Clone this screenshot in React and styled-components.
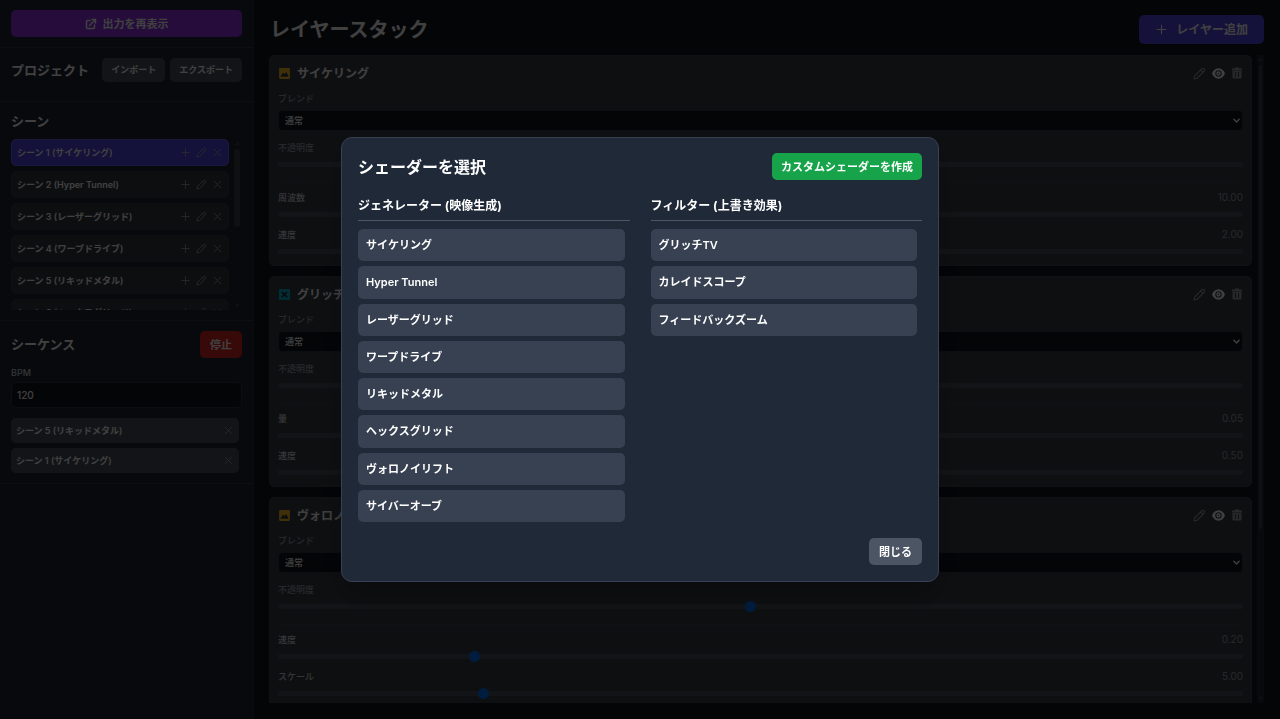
import React from "react";
import styled, { createGlobalStyle } from "styled-components";

const Global = createGlobalStyle`
  * { box-sizing: border-box; }
  html, body, #root { height: 100%; }
  body {
    margin: 0;
    overflow: hidden;
    background: #11141f;
    color: #fff;
    font-family: Inter, "Noto Sans CJK JP", sans-serif;
    font-size: 11px;
    line-height: 16px;
  }
  h1, h2, h3, p, ul { margin: 0; padding: 0; }
  ul { list-style: none; }
  button, input, select { font: inherit; color: inherit; }
`;

const Shell = styled.div`
  display: flex;
  height: 100vh;
  background: #11141f;
`;

const Sidebar = styled.aside`
  flex: 0 0 254px;
  background: #212633;
  border-right: 1px solid #2b303a;
`;

const Section = styled.section`
  padding: 10px 11px ${(p) => p.$bottom || 10}px;
  border-bottom: 1px solid #373b45;
`;

const SectionHead = styled.div`
  display: flex;
  align-items: center;
  justify-content: space-between;
  gap: 5px;
`;

const SequenceHead = styled(SectionHead)`
  margin-bottom: 8px;
`;

const SectionTitle = styled.h2`
  font-size: 13px;
  line-height: 19px;
  font-weight: 700;
  white-space: nowrap;
`;

const tones = {
  purple: "#9333ea",
  indigo: "#4f46e5",
  red: "#dc2626",
  green: "#16a34a",
  slate: "#4b5563",
  gray: "#4e525b",
};

const Button = styled.button`
  display: inline-flex;
  align-items: center;
  justify-content: center;
  gap: 6px;
  height: 27px;
  width: ${(p) => (p.$block ? "100%" : "auto")};
  padding: 0 10px;
  border: 0;
  border-radius: 5px;
  background: ${(p) => tones[p.$tone]};
  font-size: 11px;
  font-weight: 700;
  white-space: nowrap;
`;

const SmallButton = styled(Button)`
  height: 24px;
  padding: 0 9px;
  font-size: 9px;
`;

const WideButton = styled(Button)`
  height: 29px;
  padding: 0 16px;
  gap: 8px;
  font-size: 12px;
`;

const ButtonPair = styled.div`
  display: flex;
  gap: 5px;
`;

const SceneViewport = styled.div`
  display: flex;
  gap: 3px;
  height: 171px;
  margin-top: 8px;
  overflow: hidden;
`;

const SceneList = styled.ul`
  flex: 1;
  display: flex;
  flex-direction: column;
  gap: 5px;
`;

const SceneRow = styled.li`
  flex: none;
  display: flex;
  align-items: center;
  height: 27px;
  padding: 0 5px;
  border: 1px solid ${(p) => (p.$active ? "#6366f1" : "#373a42")};
  border-radius: 5px;
  background: ${(p) => (p.$active ? "#4f46e5" : "#373a42")};
  font-size: 9px;
  font-weight: 600;
`;

const RowName = styled.span`
  flex: 1;
  white-space: nowrap;
`;

const RowActions = styled.div`
  display: flex;
  gap: 5px;
`;

const IconButton = styled.button`
  display: flex;
  padding: 0;
  border: 0;
  background: none;
  color: ${(p) => (p.$bright ? "#fff" : "#9ca0a8")};
`;

const Scrollbar = styled.div`
  display: flex;
  flex-direction: column;
  align-items: center;
  justify-content: space-between;
  flex: 0 0 ${(p) => p.$width}px;
  padding: 2px 0;
  background: #1f2731;
  color: #3c4048;
`;

const ScrollThumb = styled.div`
  width: calc(100% - 4px);
  height: ${(p) => p.$size}%;
  margin: 3px 0 auto;
  border-radius: 3px;
  background: #3c4048;
`;

const FieldLabel = styled.label`
  display: block;
  font-size: 9px;
  line-height: 13px;
  font-weight: 500;
  color: ${(p) => (p.$muted ? "#9ca0a8" : "#d1d5db")};
`;

const NumberInput = styled.input`
  display: block;
  width: 100%;
  height: 26px;
  margin: 3px 0 10px;
  padding: 0 5px;
  border: 1px solid #373b45;
  border-radius: 5px;
  background: #11141f;
  font-size: 10px;
  font-weight: 500;
  appearance: textfield;
  &::-webkit-inner-spin-button { appearance: none; }
`;

const SequenceList = styled.ul`
  display: flex;
  flex-direction: column;
  gap: 5px;
  padding-right: 3px;
`;

const SequenceRow = styled.li`
  display: flex;
  align-items: center;
  height: 25px;
  padding: 0 5px;
  border-radius: 5px;
  background: #4e525b;
  font-size: 9px;
  font-weight: 600;
`;

const Main = styled.main`
  flex: 1;
  min-width: 0;
  display: flex;
  flex-direction: column;
  padding: 15px 16px 16px 15px;
`;

const MainHead = styled.header`
  display: flex;
  align-items: center;
  justify-content: space-between;
  margin-bottom: 11px;
`;

const PageTitle = styled.h1`
  padding: 2px 0 0 1px;
  font-size: 20px;
  line-height: 27px;
  font-weight: 700;
`;

const StackViewport = styled.div`
  flex: 1;
  min-height: 0;
  display: flex;
  gap: 5px;
`;

const Stack = styled.div`
  flex: 1;
  min-width: 0;
  display: flex;
  flex-direction: column;
  gap: 10px;
  overflow: hidden;
`;

const Card = styled.article`
  flex: none;
  height: 211px;
  padding: 9px 8px 8px;
  border: 1px solid #42464f;
  border-radius: 5px;
  background: #3a3e46;
`;

const CardHead = styled.div`
  display: flex;
  align-items: center;
  gap: 6px;
  height: 17px;
  margin-bottom: 10px;
`;

const CardTitle = styled.h3`
  flex: 1;
  font-size: 12px;
  line-height: 17px;
  font-weight: 700;
`;

const CardActions = styled.div`
  display: flex;
  gap: 6px;
`;

const SelectBox = styled.div`
  position: relative;
  margin: 5px 0 10px;
`;

const SelectMark = styled.span`
  position: absolute;
  top: 7px;
  right: 3px;
  pointer-events: none;
`;

const Select = styled.select`
  display: block;
  appearance: none;
  width: 100%;
  height: 21px;
  padding: 0 6px;
  border: 1px solid #373b45;
  border-radius: 4px;
  background: #11141f;
  color: #fff;
  font-size: 9px;
  font-weight: 500;
`;

const Params = styled.div`
  display: flex;
  flex-direction: column;
  gap: 5px;
  margin-top: 12px;
  padding-top: 8px;
  border-top: 1px solid #42464f;
`;

const ParamHead = styled.div`
  display: flex;
  justify-content: space-between;
`;

const Value = styled.span`
  font-size: 10px;
  line-height: 13px;
  color: #9ca0a8;
`;

const Slider = styled.input`
  display: block;
  appearance: none;
  width: 100%;
  height: 11px;
  margin: 5px 0 3px;
  background: none;
  &::-webkit-slider-runnable-track {
    height: 5px;
    border-radius: 3px;
    background: #4e525b;
  }
  &::-webkit-slider-thumb {
    appearance: none;
    width: 11px;
    height: 11px;
    margin-top: -3px;
    border-radius: 50%;
    background: #0075ff;
  }
`;

const Overlay = styled.div`
  position: fixed;
  inset: 0;
  display: flex;
  align-items: center;
  justify-content: center;
  background: rgba(0, 0, 0, 0.75);
`;

const Dialog = styled.div`
  width: 598px;
  max-width: 94vw;
  padding: 15px 16px 16px;
  border: 1px solid #374151;
  border-radius: 11px;
  background: #1f2937;
  box-shadow: 0 16px 32px rgba(0, 0, 0, 0.25);
`;

const DialogHead = styled.header`
  display: flex;
  align-items: center;
  justify-content: space-between;
  margin-bottom: 17px;
`;

const DialogTitle = styled.h2`
  font-size: 16px;
  line-height: 24px;
  font-weight: 700;
`;

const CreateButton = styled(Button)`
  padding: 0 9px;
`;

const Columns = styled.div`
  display: grid;
  grid-template-columns: 1fr 1fr;
  gap: 21px;
`;

const ColumnTitle = styled.h3`
  padding-bottom: 5px;
  margin-bottom: 8px;
  border-bottom: 1px solid #4b5563;
  font-size: 12px;
  line-height: 18px;
  font-weight: 700;
`;

const ShaderList = styled.div`
  display: grid;
  grid-template-rows: repeat(8, 1fr);
  gap: 5px;
  min-height: 293px;
  padding-right: 5px;
`;

const ShaderButton = styled.button`
  padding: 0 8px;
  border: 0;
  border-radius: 5px;
  background: #374151;
  font-size: 11px;
  line-height: 16px;
  font-weight: 600;
  text-align: left;
`;

const DialogFoot = styled.footer`
  display: flex;
  justify-content: flex-end;
  margin-top: 16px;
`;

const Svg = styled.svg`
  display: block;
  flex: none;
  width: ${(p) => p.$size}px;
  height: ${(p) => p.$size}px;
  fill: none;
  stroke: currentColor;
  stroke-width: ${(p) => p.$stroke || 2};
  stroke-linecap: round;
  stroke-linejoin: round;
`;

const PlusIcon = ({ size = 11 }) => (
  <Svg $size={size} viewBox="0 0 24 24"><path d="M12 4v16M4 12h16" /></Svg>
);
const CloseIcon = ({ size = 11 }) => (
  <Svg $size={size} viewBox="0 0 24 24"><path d="M5 5l14 14M19 5L5 19" /></Svg>
);
const PencilIcon = ({ size = 11 }) => (
  <Svg $size={size} viewBox="0 0 24 24">
    <path d="M16.5 3.2a2.6 2.6 0 0 1 3.7 0l.6.6a2.6 2.6 0 0 1 0 3.7L7.500 20.800 2 22l1.200-5.500zM14 5.700l4.300 4.300" />
  </Svg>
);
const ExternalIcon = () => (
  <Svg $size={12} $stroke={3} viewBox="0 0 24 24">
    <path d="M10 5H5a2 2 0 0 0-2 2v12a2 2 0 0 0 2 2h12a2 2 0 0 0 2-2v-5M14 3h7v7M21 3L9 15" />
  </Svg>
);
const EyeIcon = () => (
  <Svg $size={13} viewBox="0 0 24 24">
    <path
      fill="currentColor"
      stroke="none"
      fillRule="evenodd"
      d="M12 2.500C6.500 2.500 2 6.500 0 12c2 5.500 6.500 9.500 12 9.500s10-4 12-9.500c-2-5.500-6.500-9.500-12-9.500zM12 18a6 6 0 1 1 0-12 6 6 0 0 1 0 12zM12 16a4 4 0 1 0 0-8 4 4 0 0 0 0 8zM12 13.500a1.500 1.500 0 1 1 0-3 1.500 1.500 0 0 1 0 3z"
    />
  </Svg>
);
const TrashIcon = () => (
  <Svg $size={12} viewBox="0 0 24 24">
    <path fill="currentColor" stroke="none" fillRule="evenodd" d="M8 1h8v2h6v4H2V3h6zM3 8h18v13a2 2 0 0 1-2 2H5a2 2 0 0 1-2-2zm5 2v10h2V10zm6 0v10h2V10z" />
  </Svg>
);
const ImageIcon = () => (
  <Svg $size={13} viewBox="0 0 24 24">
    <path fill="#fbbf24" stroke="none" fillRule="evenodd" d="M4 2h16a2 2 0 0 1 2 2v16a2 2 0 0 1-2 2H4a2 2 0 0 1-2-2V4a2 2 0 0 1 2-2zM5 18h14v-3l-4-6-3 4-2-3-5 6z" />
  </Svg>
);
const FilterIcon = () => (
  <Svg $size={13} viewBox="0 0 24 24">
    <path fill="#06b6d4" stroke="none" d="M2 2h20v20H2z" />
    <path stroke="#1f2937" strokeWidth="3" d="M8 8l8 8M16 8l-8 8" />
  </Svg>
);
const ChevronIcon = () => (
  <Svg $size={7} $stroke={5} viewBox="0 0 24 24"><path d="M3 8l9 9 9-9" /></Svg>
);
const Arrow = ({ down }) => (
  <Svg $size={5} viewBox="0 0 6 6">
    <path fill="currentColor" stroke="none" d={down ? "M0 1h6L3 5z" : "M0 5h6L3 1z"} />
  </Svg>
);

const scenes = ["サイケリング", "Hyper Tunnel", "レーザーグリッド", "ワープドライブ", "リキッドメタル", "ヘックスグリッド"];
const sequence = ["シーン 5 (リキッドメタル)", "シーン 1 (サイケリング)"];
const layers = [
  { name: "サイケリング", Icon: ImageIcon, opacity: 49, params: [["周波数", "10.00", 50], ["速度", "2.00", 40]] },
  { name: "グリッチTV", Icon: FilterIcon, opacity: 49, params: [["量", "0.05", 50], ["速度", "0.50", 50]] },
  { name: "ヴォロノイリフト", Icon: ImageIcon, opacity: 49, params: [["速度", "0.20", 20], ["スケール", "5.00", 21]] },
];
const generators = [...scenes, "ヴォロノイリフト", "サイバーオーブ"];
const filters = ["グリッチTV", "カレイドスコープ", "フィードバックズーム"];

function LayerCard({ layer, index }) {
  const { Icon } = layer;
  return (
    <Card>
      <CardHead>
        <Icon />
        <CardTitle>{layer.name}</CardTitle>
        <CardActions>
          <IconButton aria-label="編集"><PencilIcon size={13} /></IconButton>
          <IconButton aria-label="表示" $bright><EyeIcon /></IconButton>
          <IconButton aria-label="削除"><TrashIcon /></IconButton>
        </CardActions>
      </CardHead>
      <FieldLabel $muted htmlFor={`blend-${index}`}>ブレンド</FieldLabel>
      <SelectBox>
        <Select id={`blend-${index}`}><option>通常</option></Select>
        <SelectMark><ChevronIcon /></SelectMark>
      </SelectBox>
      <FieldLabel $muted htmlFor={`opacity-${index}`}>不透明度</FieldLabel>
      <Slider id={`opacity-${index}`} type="range" defaultValue={layer.opacity} />
      <Params>
        {layer.params.map(([label, value, position], i) => (
          <div key={label}>
            <ParamHead>
              <FieldLabel htmlFor={`param-${index}-${i}`}>{label}</FieldLabel>
              <Value>{value}</Value>
            </ParamHead>
            <Slider id={`param-${index}-${i}`} type="range" defaultValue={position} />
          </div>
        ))}
      </Params>
    </Card>
  );
}

function ShaderColumn({ title, items }) {
  return (
    <section>
      <ColumnTitle>{title}</ColumnTitle>
      <ShaderList>
        {items.map((name) => <ShaderButton key={name}>{name}</ShaderButton>)}
      </ShaderList>
    </section>
  );
}

export default function App() {
  return (
    <>
      <Global />
      <Shell>
        <Sidebar>
          <Section>
            <Button $tone="purple" $block><ExternalIcon />出力を再表示</Button>
          </Section>
          <Section $bottom={19}>
            <SectionHead>
              <SectionTitle>プロジェクト</SectionTitle>
              <ButtonPair>
                <SmallButton $tone="gray">インポート</SmallButton>
                <SmallButton $tone="gray">エクスポート</SmallButton>
              </ButtonPair>
            </SectionHead>
          </Section>
          <Section>
            <SectionTitle>シーン</SectionTitle>
            <SceneViewport>
              <SceneList>
                {scenes.map((name, i) => (
                  <SceneRow key={name} $active={i === 0}>
                    <RowName>{`シーン ${i + 1} (${name})`}</RowName>
                    <RowActions>
                      <IconButton aria-label="追加"><PlusIcon /></IconButton>
                      <IconButton aria-label="編集"><PencilIcon /></IconButton>
                      <IconButton aria-label="削除"><CloseIcon /></IconButton>
                    </RowActions>
                  </SceneRow>
                ))}
              </SceneList>
              <Scrollbar $width={10}><Arrow /><ScrollThumb $size={47} /><Arrow down /></Scrollbar>
            </SceneViewport>
          </Section>
          <Section>
            <SequenceHead>
              <SectionTitle>シーケンス</SectionTitle>
              <Button $tone="red">停止</Button>
            </SequenceHead>
            <FieldLabel htmlFor="bpm">BPM</FieldLabel>
            <NumberInput id="bpm" type="number" defaultValue="120" />
            <SequenceList>
              {sequence.map((name) => (
                <SequenceRow key={name}>
                  <RowName>{name}</RowName>
                  <IconButton aria-label="削除"><CloseIcon /></IconButton>
                </SequenceRow>
              ))}
            </SequenceList>
          </Section>
        </Sidebar>
        <Main>
          <MainHead>
            <PageTitle>レイヤースタック</PageTitle>
            <WideButton $tone="indigo"><PlusIcon size={13} />レイヤー追加</WideButton>
          </MainHead>
          <StackViewport>
            <Stack>
              {layers.map((layer, i) => <LayerCard key={layer.name} layer={layer} index={i} />)}
            </Stack>
            <Scrollbar $width={7}><Arrow /><ScrollThumb $size={72} /><Arrow down /></Scrollbar>
          </StackViewport>
        </Main>
      </Shell>
      <Overlay>
        <Dialog role="dialog" aria-modal="true" aria-labelledby="dialog-title">
          <DialogHead>
            <DialogTitle id="dialog-title">シェーダーを選択</DialogTitle>
            <CreateButton $tone="green">カスタムシェーダーを作成</CreateButton>
          </DialogHead>
          <Columns>
            <ShaderColumn title="ジェネレーター (映像生成)" items={generators} />
            <ShaderColumn title="フィルター (上書き効果)" items={filters} />
          </Columns>
          <DialogFoot><Button $tone="slate">閉じる</Button></DialogFoot>
        </Dialog>
      </Overlay>
    </>
  );
}
